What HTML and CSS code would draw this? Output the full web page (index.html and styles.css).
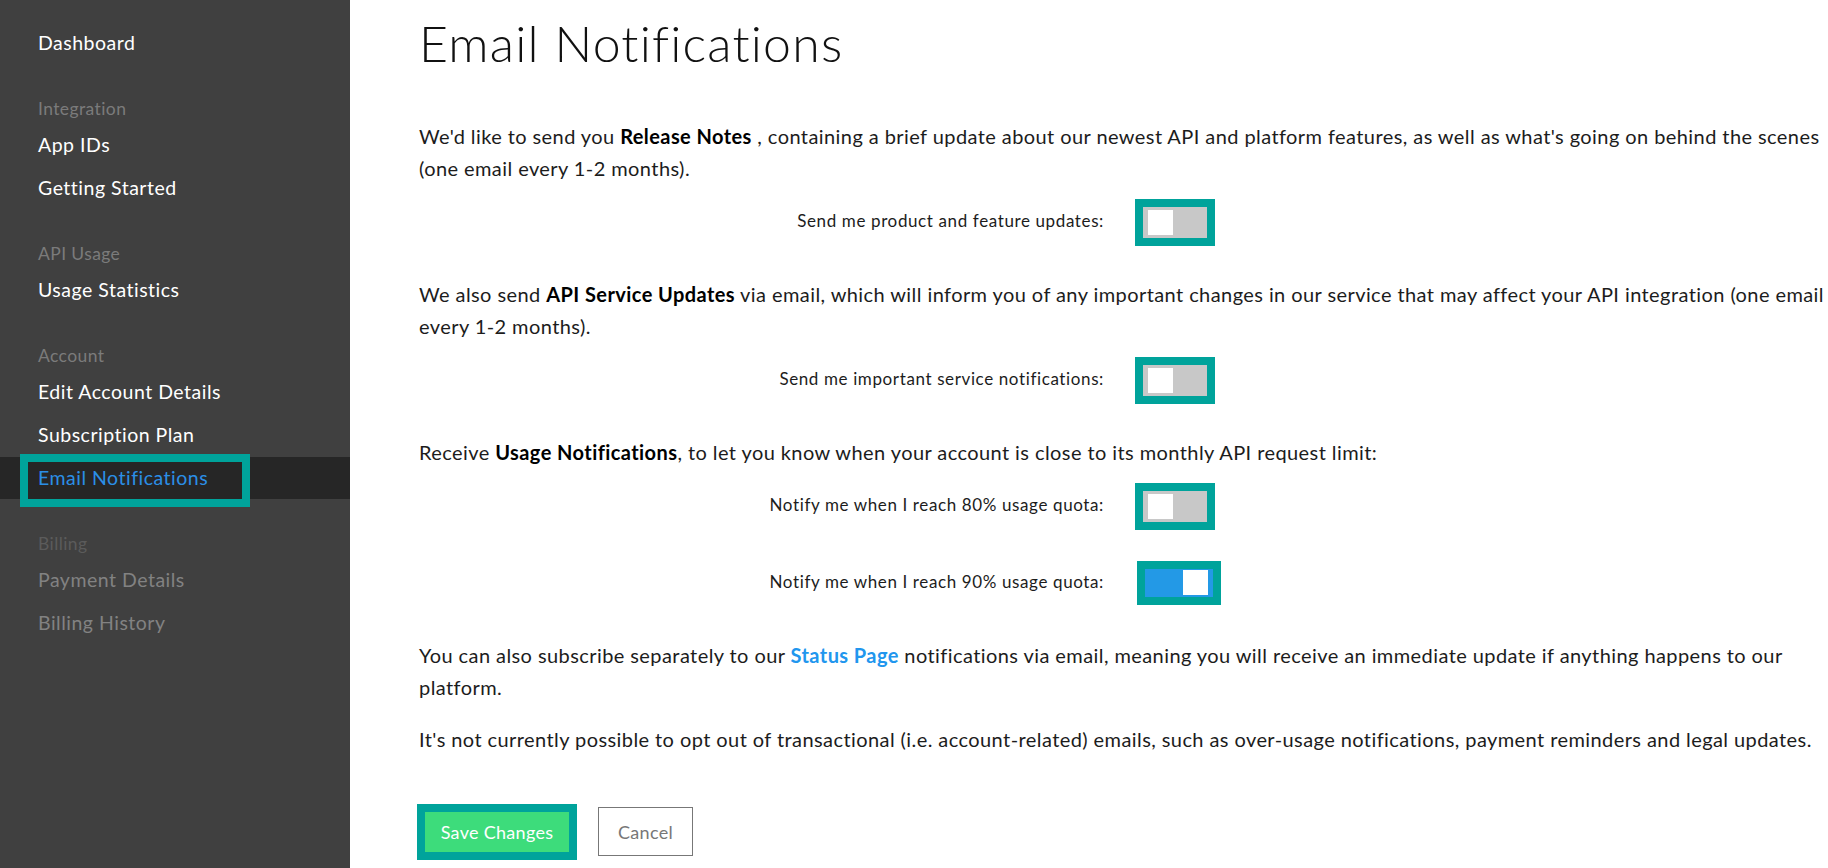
FILE: index.html
```html
<!DOCTYPE html>
<html lang="en">
<head>
<meta charset="utf-8">
<title>Email Notifications</title>
<link rel="stylesheet" href="styles.css">
</head>
<body>
<div class="layout">
  <aside class="sidebar">
    <a class="nav-item" href="#">Dashboard</a>
    <div class="nav-group">
      <div class="nav-label">Integration</div>
      <a class="nav-item" href="#">App IDs</a>
      <a class="nav-item" href="#">Getting Started</a>
    </div>
    <div class="nav-group">
      <div class="nav-label">API Usage</div>
      <a class="nav-item" href="#">Usage Statistics</a>
    </div>
    <div class="nav-group">
      <div class="nav-label">Account</div>
      <a class="nav-item" href="#">Edit Account Details</a>
      <a class="nav-item" href="#">Subscription Plan</a>
      <a class="nav-item active" href="#">Email Notifications</a>
    </div>
    <div class="nav-group disabled">
      <div class="nav-label">Billing</div>
      <a class="nav-item" href="#">Payment Details</a>
      <a class="nav-item" href="#">Billing History</a>
    </div>
  </aside>

  <main class="content">
    <h1 class="title">Email Notifications</h1>

    <p class="text">We'd like to send you <strong>Release Notes</strong> , containing a brief update about our newest API and platform features, as well as what's going on behind the scenes (one email every 1-2 months).</p>
    <div class="switch-row">
      <label class="switch-label">Send me product and feature updates:</label>
      <span class="switch"><span class="knob"></span></span>
    </div>

    <p class="text">We also send <strong>API Service Updates</strong> via email, which will inform you of any important changes in our service that may affect your API integration (one email every 1-2 months).</p>
    <div class="switch-row">
      <label class="switch-label">Send me important service notifications:</label>
      <span class="switch"><span class="knob"></span></span>
    </div>

    <p class="text">Receive <strong>Usage Notifications</strong>, to let you know when your account is close to its monthly API request limit:</p>
    <div class="switch-row tight">
      <label class="switch-label">Notify me when I reach 80% usage quota:</label>
      <span class="switch"><span class="knob"></span></span>
    </div>
    <div class="switch-row last">
      <label class="switch-label">Notify me when I reach 90% usage quota:</label>
      <span class="switch on"><span class="knob"></span></span>
    </div>

    <p class="text">You can also subscribe separately to our <a class="link" href="#">Status Page</a> notifications via email, meaning you will receive an immediate update if anything happens to our platform.</p>
    <p class="text note">It's not currently possible to opt out of transactional (i.e. account-related) emails, such as over-usage notifications, payment reminders and legal updates.</p>

    <div class="actions">
      <button class="btn btn-save" type="button">Save Changes</button>
      <button class="btn btn-cancel" type="button">Cancel</button>
    </div>
  </main>
</div>
</body>
</html>
```

FILE: styles.css
```css
html, body {
  margin: 0;
  padding: 0;
  height: 868px;
  overflow: hidden;
  background: #ffffff;
  font-family: Lato, "Open Sans", sans-serif;
}

.layout {
  display: flex;
  height: 868px;
}

/* Sidebar */
.sidebar {
  flex: none;
  width: 350px;
  background: #404040;
  padding-top: 22px;
  box-sizing: border-box;
}

.nav-item {
  position: relative;
  display: block;
  height: 42px;
  line-height: 42px;
  margin-bottom: 1px;
  padding-left: 38px;
  font-size: 19.5px;
  letter-spacing: 0.5px;
  color: #ffffff;
  text-decoration: none;
}

.nav-group {
  margin-top: 31px;
}

.nav-label {
  line-height: 27px;
  padding: 0 0 2px 38px;
  font-size: 17.5px;
  letter-spacing: 0.4px;
  color: #7b7b7b;
}

.nav-item.active {
  background: #262626;
  color: #2b8fe6;
}

.nav-item.active::after {
  content: "";
  position: absolute;
  left: 20px;
  top: -3px;
  width: 230px;
  height: 53px;
  border: 8px solid #00a39b;
  box-sizing: border-box;
}

.disabled .nav-label {
  color: #5b5b5b;
}

.disabled .nav-item {
  color: #828282;
}

/* Content */
.content {
  flex: none;
  width: 1495px;
  padding: 13px 0 0 69px;
  box-sizing: border-box;
  color: #1c1c1c;
}

.title {
  margin: 0 0 47px;
  font-size: 50px;
  line-height: 60px;
  font-weight: 300;
  letter-spacing: 1.2px;
  color: #111111;
}

.text {
  margin: 0 0 15px;
  font-size: 20px;
  line-height: 32px;
  letter-spacing: 0.42px;
}

.text strong {
  font-weight: 700;
  color: #000;
}

.text.note {
  margin-top: 20px;
  margin-bottom: 52px;
}

.link {
  color: #2196ee;
  font-weight: 700;
  text-decoration: none;
}

.switch-row {
  display: grid;
  grid-template-columns: 685px auto;
  column-gap: 31px;
  align-items: center;
  justify-content: start;
  margin-bottom: 32px;
}

.switch-row.tight {
  margin-bottom: 31px;
}

.switch-row.last {
  margin-bottom: 34px;
}

.switch-label {
  text-align: right;
  font-size: 17px;
  letter-spacing: 0.62px;
  padding-bottom: 4px;
  color: #1c1c1c;
}

.switch {
  position: relative;
  display: block;
  width: 64px;
  height: 31px;
  background: #c8c8c8;
  border: 8px solid #00a39b;
}

.knob {
  position: absolute;
  top: 3px;
  left: 5px;
  width: 25px;
  height: 25px;
  background: #ffffff;
}

.switch.on {
  width: 68px;
  height: 28px;
  margin-left: 2px;
  background: #2399e6;
}

.switch.on .knob {
  top: 1px;
  left: auto;
  right: 5px;
}

.actions {
  display: flex;
  align-items: center;
  gap: 29px;
  padding-left: 6px;
}

.btn {
  font-family: Lato, "Open Sans", sans-serif;
  font-size: 18px;
  letter-spacing: 0.3px;
  margin: 0;
  cursor: pointer;
}

.btn-save {
  width: 144px;
  height: 40px;
  padding: 0;
  border: none;
  background: #3ddc7b;
  color: #ffffff;
  outline: 8px solid #00a39b;
}

.btn-cancel {
  width: 95px;
  height: 49px;
  padding: 0;
  background: #ffffff;
  border: 1px solid #777777;
  color: #777777;
}
```
